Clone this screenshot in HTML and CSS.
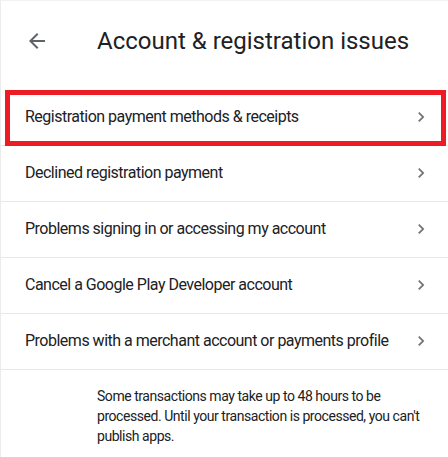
FILE: index.html
```html
<!DOCTYPE html>
<html lang="en">
<head>
<meta charset="utf-8">
<title>Account &amp; registration issues</title>
<link rel="stylesheet" href="styles.css">
</head>
<body>
<div class="card">
  <header class="header">
    <svg class="back" viewBox="0 0 24 24" width="24" height="24" aria-hidden="true"><path d="M20 11H7.83l5.59-5.59L12 4l-8 8 8 8 1.41-1.41L7.83 13H20v-2z"/></svg>
    <h1 class="title">Account &amp; registration issues</h1>
  </header>
  <ul class="list">
    <li class="row row-highlight"><span class="label">Registration payment methods &amp; receipts</span><svg class="chev" viewBox="0 0 24 24" width="20" height="20"><path d="M10 6L8.59 7.41 13.17 12l-4.58 4.59L10 18l6-6z"/></svg><span class="mark"></span></li>
    <li class="row"><span class="label">Declined registration payment</span><svg class="chev" viewBox="0 0 24 24" width="20" height="20"><path d="M10 6L8.59 7.41 13.17 12l-4.58 4.59L10 18l6-6z"/></svg></li>
    <li class="row"><span class="label">Problems signing in or accessing my account</span><svg class="chev" viewBox="0 0 24 24" width="20" height="20"><path d="M10 6L8.59 7.41 13.17 12l-4.58 4.59L10 18l6-6z"/></svg></li>
    <li class="row"><span class="label">Cancel a Google Play Developer account</span><svg class="chev" viewBox="0 0 24 24" width="20" height="20"><path d="M10 6L8.59 7.41 13.17 12l-4.58 4.59L10 18l6-6z"/></svg></li>
    <li class="row"><span class="label">Problems with a merchant account or payments profile</span><svg class="chev" viewBox="0 0 24 24" width="20" height="20"><path d="M10 6L8.59 7.41 13.17 12l-4.58 4.59L10 18l6-6z"/></svg></li>
  </ul>
  <p class="note">Some transactions may take up to 48 hours to be processed. Until your transaction is processed, you can't publish apps.</p>
</div>
</body>
</html>
```
FILE: styles.css
```css
html, body {
  margin: 0;
  padding: 0;
  background: #fff;
}
body {
  font-family: Roboto, "Noto Sans", Arial, sans-serif;
  color: #202124;
  width: 448px;
  height: 457px;
  overflow: hidden;
}
.card {
  border-left: 1px solid #ececec;
  border-top: 1px solid #f2f2f2;
  min-height: 456px;
}
.header {
  display: flex;
  align-items: center;
  padding: 24px 0 33px 24px;
}
.back {
  fill: #5f6368;
  flex: none;
}
.title {
  margin: 0 0 0 48px;
  font-size: 24px;
  line-height: 32px;
  font-weight: 400;
  color: #202124;
}
.list {
  list-style: none;
  margin: 0;
  padding: 0;
}
.row {
  position: relative;
  display: flex;
  align-items: center;
  justify-content: space-between;
  padding: 15px 17px 16px 24px;
  border-bottom: 1px solid #e8e8e8;
  font-size: 16px;
  line-height: 24px;
  letter-spacing: -0.5px;
}
.label {
  white-space: nowrap;
}
.chev {
  fill: #707070;
  flex: none;
}
.mark {
  position: absolute;
  left: 4px;
  right: 2px;
  top: 0;
  bottom: -1px;
  border: 5px solid #ed1c24;
}
.note {
  margin: 0;
  padding: 16px 0 0 96px;
  width: 336px;
  font-size: 14px;
  line-height: 20px;
  letter-spacing: -0.45px;
  color: #202124;
}
```
